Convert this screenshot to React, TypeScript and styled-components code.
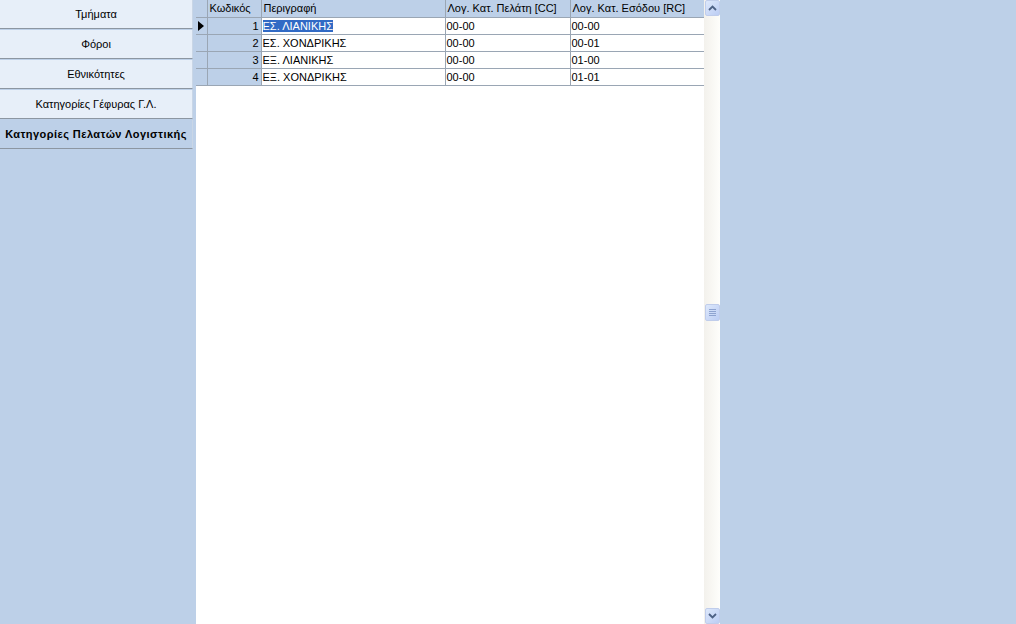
import React from 'react';
import styled, { createGlobalStyle } from 'styled-components';

const GlobalStyle = createGlobalStyle`
  html, body { margin: 0; padding: 0; }
  body {
    background: #bdd0e8;
    font-family: "Liberation Sans", Tahoma, Arial, sans-serif;
    font-size: 11px;
    color: #000;
  }
`;

const Screen = styled.div`
  display: flex;
  width: 1016px;
  height: 624px;
  background: #bdd0e8;
  overflow: hidden;
`;

const SidePanel = styled.div`
  width: 193px;
  display: flex;
  flex-direction: column;
  gap: 1px;
  margin-right: 3px;
`;

const NavButton = styled.div<{ $active?: boolean }>`
  height: 28px;
  display: flex;
  align-items: center;
  justify-content: center;
  background: ${p => (p.$active ? '#bdd0e8' : '#e7eff9')};
  border-bottom: 1px solid #8c96a2;
  border-right: 1px solid #c9d6e6;
  font-weight: ${p => (p.$active ? 'bold' : 'normal')};
  letter-spacing: ${p => (p.$active ? '0.45px' : '0')};
  font-size: 11px;
  white-space: nowrap;
`;

const GridArea = styled.div`
  width: 508px;
  background: #fff;
  display: flex;
  flex-direction: column;
`;

const Table = styled.table`
  border-collapse: collapse;
  table-layout: fixed;
  width: 508px;
`;

const HeadCell = styled.th`
  box-sizing: border-box;
  height: 17px;
  padding: 0 2px;
  background: #bdd0e8;
  border-right: 1px solid #9aa6b4;
  border-bottom: 1px solid #9aa6b4;
  font-weight: normal;
  text-align: left;
  white-space: nowrap;
  overflow: hidden;
  font-size: 11px;
  line-height: 16px;
`;

const Cell = styled.td<{ $blue?: boolean; $right?: boolean }>`
  box-sizing: border-box;
  height: 17px;
  padding: 0 2px 0 1px;
  background: ${p => (p.$blue ? '#bdd0e8' : '#fff')};
  border-right: 1px solid #9aa6b4;
  border-bottom: 1px solid #9aa6b4;
  text-align: ${p => (p.$right ? 'right' : 'left')};
  white-space: nowrap;
  overflow: hidden;
  font-size: 11px;
  line-height: 16px;
`;

const IndicatorCell = styled.td`
  box-sizing: border-box;
  height: 17px;
  padding: 0 0 0 2px;
  background: #bdd0e8;
  border-right: 1px solid #9aa6b4;
  border-bottom: 1px solid #9aa6b4;
  vertical-align: middle;
  line-height: 0;
`;

const Selected = styled.span`
  background: #316ac5;
  color: #fff;
`;

const ScrollBar = styled.div`
  width: 16px;
  display: flex;
  flex-direction: column;
  justify-content: space-between;
  background: linear-gradient(to right, #f3f1ec, #fefefb);
`;

const ScrollArrow = styled.div`
  height: 16px;
  width: 15px;
  margin-left: 1px;
  display: flex;
  align-items: center;
  justify-content: center;
  background: linear-gradient(to bottom right, #dde8fb, #bccdf4);
  border: 1px solid #c0cdeb;
  box-sizing: border-box;
  border-radius: 2px;
`;

const Thumb = styled(ScrollArrow)`
  height: 17px;
`;

const columns = [
  { title: '', w: 11 },
  { title: 'Κωδικός', w: 54 },
  { title: 'Περιγραφή', w: 184 },
  { title: 'Λογ. Κατ. Πελάτη [CC]', w: 125 },
  { title: 'Λογ. Κατ. Εσόδου [RC]', w: 134 },
];

const rows = [
  { code: 1, desc: 'ΕΣ. ΛΙΑΝΙΚΗΣ', cc: '00-00', rc: '00-00' },
  { code: 2, desc: 'ΕΣ. ΧΟΝΔΡΙΚΗΣ', cc: '00-00', rc: '00-01' },
  { code: 3, desc: 'ΕΞ. ΛΙΑΝΙΚΗΣ', cc: '00-00', rc: '01-00' },
  { code: 4, desc: 'ΕΞ. ΧΟΝΔΡΙΚΗΣ', cc: '00-00', rc: '01-01' },
];

const navItems = ['Τμήματα', 'Φόροι', 'Εθνικότητες', 'Κατηγορίες Γέφυρας Γ.Λ.', 'Κατηγορίες Πελατών Λογιστικής'];

const Chevron = ({ up }: { up?: boolean }) => (
  <svg width="9" height="6" viewBox="0 0 9 6">
    <path d={up ? 'M1 5 L4.5 1.5 L8 5' : 'M1 1 L4.5 4.5 L8 1'} fill="none" stroke="#4d6185" strokeWidth="1.8" />
  </svg>
);

const App = () => (
  <Screen>
    <GlobalStyle />
    <SidePanel>
      {navItems.map((n, i) => (
        <NavButton key={n} $active={i === navItems.length - 1}>{n}</NavButton>
      ))}
    </SidePanel>
    <GridArea>
      <Table>
        <colgroup>
          {columns.map((c, i) => (
            <col key={i} style={{ width: c.w }} />
          ))}
        </colgroup>
        <thead>
          <tr>
            {columns.map((c, i) => (
              <HeadCell key={i}>{c.title}</HeadCell>
            ))}
          </tr>
        </thead>
        <tbody>
          {rows.map((r, i) => (
            <tr key={r.code}>
              <IndicatorCell>
                {i === 0 && (
                  <svg width="6" height="10" viewBox="0 0 6 10">
                    <path d="M0 0 L6 5 L0 10 Z" fill="#000" />
                  </svg>
                )}
              </IndicatorCell>
              <Cell $blue $right>{r.code}</Cell>
              <Cell>{i === 0 ? <Selected>{r.desc}</Selected> : r.desc}</Cell>
              <Cell>{r.cc}</Cell>
              <Cell>{r.rc}</Cell>
            </tr>
          ))}
        </tbody>
      </Table>
    </GridArea>
    <ScrollBar>
      <ScrollArrow><Chevron up /></ScrollArrow>
      <Thumb>
        <svg width="7" height="7" viewBox="0 0 7 7">
          <path d="M0 0.5 H7 M0 2.5 H7 M0 4.5 H7 M0 6.5 H7" stroke="#8ea3d0" strokeWidth="1" />
        </svg>
      </Thumb>
      <ScrollArrow><Chevron /></ScrollArrow>
    </ScrollBar>
  </Screen>
);

export default App;
